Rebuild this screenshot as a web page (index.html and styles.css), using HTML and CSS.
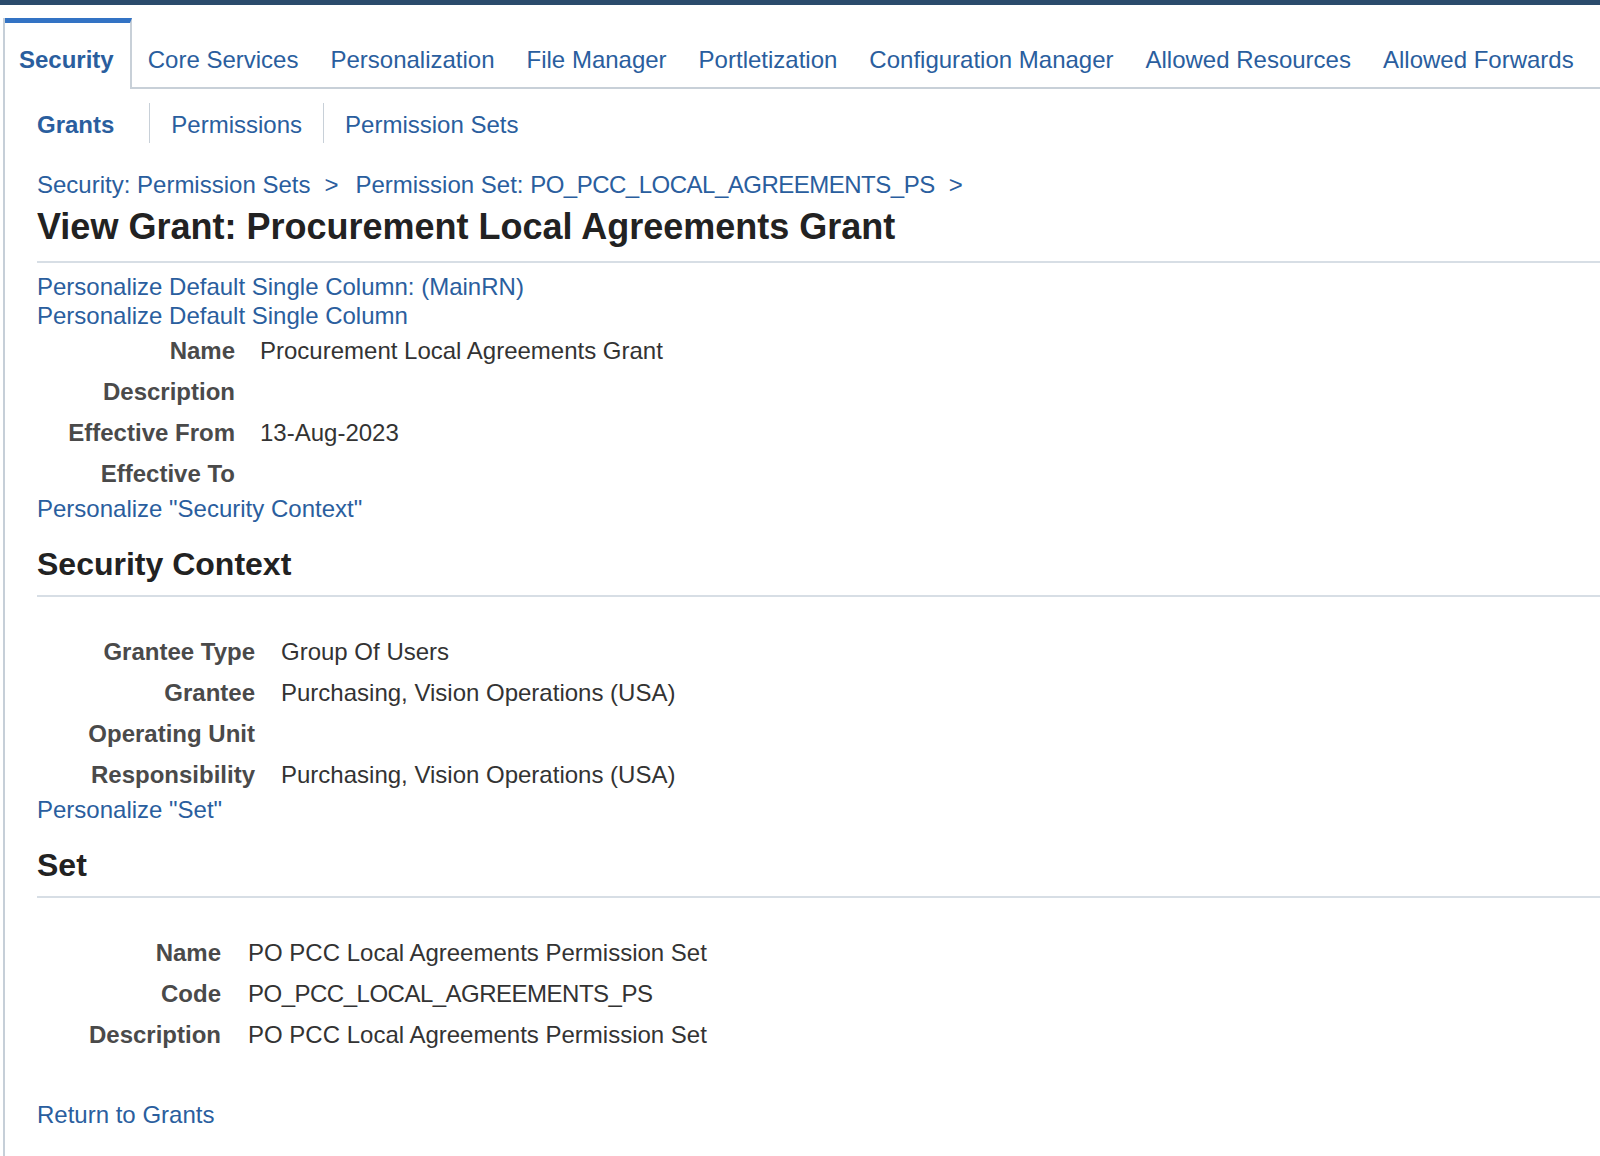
FILE: index.html
```html
<!DOCTYPE html>
<html lang="en">
<head>
<meta charset="utf-8">
<title>View Grant</title>
<link rel="stylesheet" href="styles.css">
</head>
<body>
<div class="topbar"></div>
<div class="page">
  <nav class="tabs">
    <a class="tab active first">Security</a>
    <a class="tab">Core Services</a>
    <a class="tab">Personalization</a>
    <a class="tab">File Manager</a>
    <a class="tab">Portletization</a>
    <a class="tab">Configuration Manager</a>
    <a class="tab">Allowed Resources</a>
    <a class="tab">Allowed Forwards</a>
  </nav>
  <div class="content">
    <nav class="subtabs">
      <a class="subtab current">Grants</a>
      <a class="subtab">Permissions</a>
      <a class="subtab">Permission Sets</a>
    </nav>
    <div class="crumbs">
      <a class="crumb">Security: Permission Sets</a><span class="sep">&gt;</span><a class="crumb">Permission Set: <span class="code">PO_PCC_LOCAL_AGREEMENTS_PS</span></a><span class="sep">&gt;</span>
    </div>
    <h1 class="title">View Grant: Procurement Local Agreements Grant</h1>
    <div class="main">
      <a class="plink">Personalize Default Single Column: (MainRN)</a>
      <a class="plink">Personalize Default Single Column</a>
      <div class="fields f1">
        <div class="label">Name</div><div class="value">Procurement Local Agreements Grant</div>
        <div class="label">Description</div><div class="value"></div>
        <div class="label">Effective From</div><div class="value">13-Aug-2023</div>
        <div class="label">Effective To</div><div class="value"></div>
      </div>
      <a class="plink">Personalize "Security Context"</a>
      <h2 class="section">Security Context</h2>
      <div class="fields f2">
        <div class="label">Grantee Type</div><div class="value">Group Of Users</div>
        <div class="label">Grantee</div><div class="value">Purchasing, Vision Operations (USA)</div>
        <div class="label">Operating Unit</div><div class="value"></div>
        <div class="label">Responsibility</div><div class="value">Purchasing, Vision Operations (USA)</div>
      </div>
      <a class="plink">Personalize "Set"</a>
      <h2 class="section">Set</h2>
      <div class="fields f3">
        <div class="label">Name</div><div class="value">PO PCC Local Agreements Permission Set</div>
        <div class="label">Code</div><div class="value"><span class="code">PO_PCC_LOCAL_AGREEMENTS_PS</span></div>
        <div class="label">Description</div><div class="value">PO PCC Local Agreements Permission Set</div>
      </div>
      <a class="plink return">Return to Grants</a>
    </div>
  </div>
</div>
</body>
</html>
```
FILE: styles.css
```css
html, body {
  margin: 0;
  padding: 0;
  background: #ffffff;
}
body {
  font-family: "Liberation Sans", Arial, Helvetica, sans-serif;
  font-size: 24px;
  color: #333333;
}
a {
  color: #2a5e9e;
  text-decoration: none;
  cursor: pointer;
}
.topbar {
  height: 5px;
  background: #2b4b6c;
}
.page {
  margin-top: 13px;
  margin-left: 3px;
  border-left: 2px solid #c6cfd8;
  min-height: 1138px;
}
.tabs {
  display: flex;
  align-items: flex-end;
  border-bottom: 2px solid #c8d0d8;
  white-space: nowrap;
}
.tab {
  display: block;
  padding: 10px 16px 0 16px;
  line-height: 54px;
}
.tab.first {
  padding-left: 14px;
}
.tab.active {
  font-weight: bold;
  background: #ffffff;
  border-top: 5px solid #3373c4;
  border-right: 2px solid #c8d0d8;
  padding-bottom: 2px;
  margin-bottom: -2px;
}
.content {
  padding-left: 32px;
}
.subtabs {
  display: flex;
  margin-top: 14px;
  height: 40px;
}
.subtab {
  display: block;
  padding: 3px 21px 0 21px;
  line-height: 37px;
  border-left: 1px solid #c8d0d8;
}
.subtab.current {
  font-weight: bold;
  border-left: none;
  padding-left: 0;
  padding-right: 35px;
}
.crumbs {
  margin-top: 27px;
  line-height: 30px;
  color: #2a5e9e;
  white-space: nowrap;
}
.sep {
  margin: 0 17px 0 14px;
}
.code {
  letter-spacing: -0.5px;
}
.title {
  margin: 5px 0 0 0;
  font-size: 36px;
  line-height: 44px;
  font-weight: bold;
  color: #222222;
  padding-bottom: 12px;
  border-bottom: 2px solid #d7dee5;
}
.main {
  padding-top: 9px;
}
.plink {
  display: block;
  line-height: 29px;
  width: max-content;
}
.fields {
  display: grid;
  line-height: 41px;
}
.f1 {
  grid-template-columns: 198px auto;
  column-gap: 25px;
}
.f2 {
  grid-template-columns: 218px auto;
  column-gap: 26px;
  margin-top: 34px;
}
.f3 {
  grid-template-columns: 184px auto;
  column-gap: 27px;
  margin-top: 34px;
}
.label {
  text-align: right;
  font-weight: bold;
  color: #4a4a4a;
  white-space: nowrap;
}
.value {
  color: #333333;
  white-space: nowrap;
}
.section {
  margin: 21px 0 0 0;
  font-size: 32px;
  line-height: 40px;
  font-weight: bold;
  color: #222222;
  padding-bottom: 11px;
  border-bottom: 2px solid #d7dee5;
}
.return {
  margin-top: 45px;
}
```
